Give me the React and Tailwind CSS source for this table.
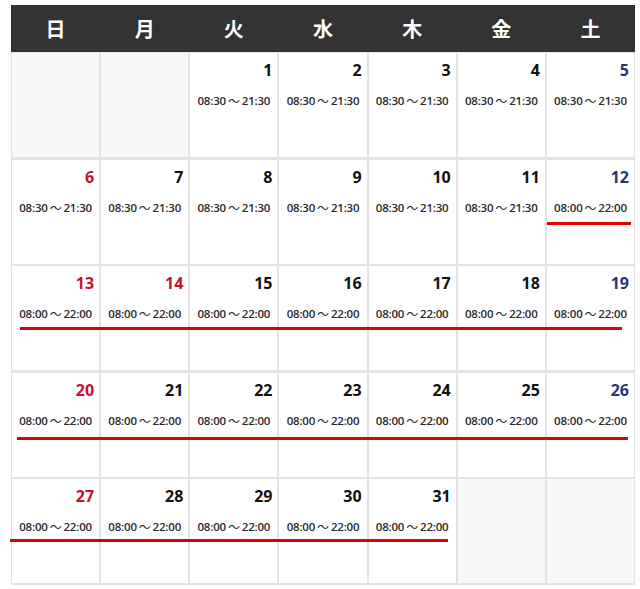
import React from 'react';

const days = ['日', '月', '火', '水', '木', '金', '土'];

// null = empty cell
const weeks = [
  [null, null, 1, 2, 3, 4, 5],
  [6, 7, 8, 9, 10, 11, 12],
  [13, 14, 15, 16, 17, 18, 19],
  [20, 21, 22, 23, 24, 25, 26],
  [27, 28, 29, 30, 31, null, null],
];

const holidays = [14];

function getHours(day) {
  if (day <= 11) return ['08:30', '21:30'];
  return ['08:00', '22:00'];
}

function dayColor(day, col) {
  if (col === 0 || holidays.includes(day)) return 'text-[#c8102e]';
  if (col === 6) return 'text-[#1f3a73]';
  return 'text-[#111]';
}

// red marker lines drawn over the grid
const lines = [
  { left: 547, top: 222, width: 84 },
  { left: 20, top: 327, width: 602 },
  { left: 17, top: 437, width: 611 },
  { left: 10, top: 539, width: 438 },
];

export default function App() {
  return (
    <div className="relative w-[640px] h-[589px] bg-white" style={{ fontFamily: '"Open Sans", "Noto Sans CJK JP", sans-serif' }}>
      <div className="absolute left-[11px] top-[5px] w-[624px]">
        {/* Header */}
        <div className="grid grid-cols-7 h-[47px] bg-[#333333]">
          {days.map((d) => (
            <div key={d} className="flex items-center justify-center text-white text-[20px] font-bold" style={{ fontFamily: '"Noto Sans CJK JP", sans-serif' }}>
              {d}
            </div>
          ))}
        </div>

        {/* Body */}
        <div className="flex flex-col gap-[2.5px] bg-[#e3e3e3] px-[1px] pt-[1px] pb-[2px]">
          {weeks.map((week, wi) => (
            <div key={wi} className="grid grid-cols-7 gap-[2px] h-[104px]">
              {week.map((day, ci) => {
                if (day === null) {
                  return <div key={ci} className="bg-[#f8f8f8]" />;
                }
                const [from, to] = getHours(day);
                return (
                  <div key={ci} className="bg-white flex flex-col pt-[6px]">
                    <div className={`text-right pr-[5px] text-[16px] font-bold leading-[22px] ${dayColor(day, ci)}`}>
                      {day}
                    </div>
                    <div className="mt-[12px] flex items-center justify-center text-[11.5px] font-semibold text-[#2a2a2a] tracking-[-0.2px] leading-[16px] whitespace-nowrap">
                      <span>{from}</span>
                      <span className="mx-[2px] text-[12px] font-normal" style={{ fontFamily: '"Noto Sans CJK JP", sans-serif' }}>～</span>
                      <span>{to}</span>
                    </div>
                  </div>
                );
              })}
            </div>
          ))}
        </div>
      </div>

      {lines.map((l, i) => (
        <div
          key={i}
          className="absolute h-[3px] bg-[#e00000]"
          style={{ left: l.left, top: l.top, width: l.width }}
        />
      ))}
    </div>
  );
}
